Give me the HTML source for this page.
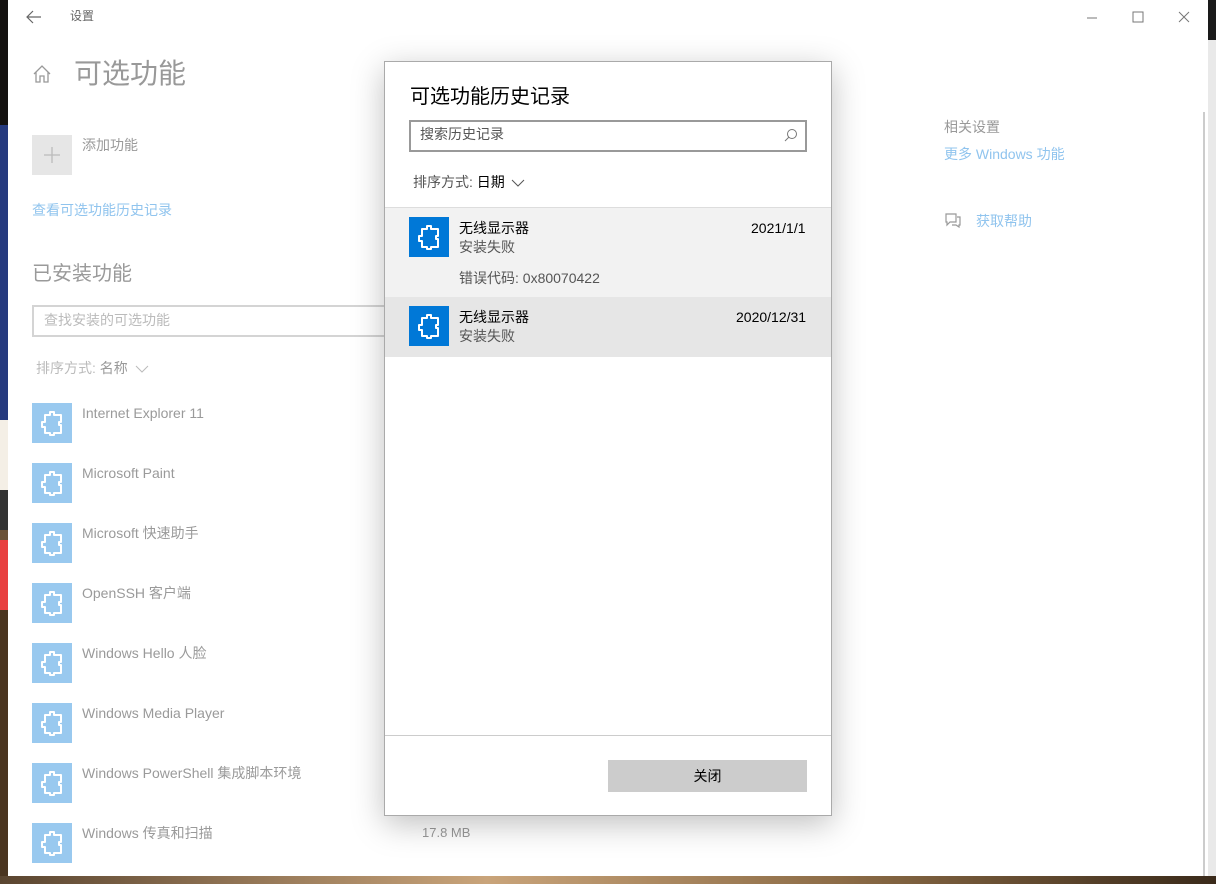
<!DOCTYPE html>
<html><head><meta charset="utf-8">
<style>
*{margin:0;padding:0;box-sizing:border-box}
body{width:1216px;height:884px;overflow:hidden;position:relative;background:#6b5238;font-family:"Liberation Sans","Noto Sans CJK SC",sans-serif}
.abs{position:absolute}
.win{position:absolute;left:8px;top:0;width:1200px;height:876px;background:#fff}
.t{position:absolute;white-space:nowrap;line-height:1.32}
.ico{position:absolute;width:40px;height:40px;background:#99c9ef}
.ico svg,.bico svg{position:absolute;left:0;top:0}
.bico{position:absolute;width:40px;height:40px;background:#0078d7}
.gray{color:#9a9a9a}
</style></head><body>
<div class="abs" style="left:0;top:0;width:8px;height:125px;background:#141210"></div>
<div class="abs" style="left:0;top:125px;width:8px;height:295px;background:#263a7e"></div>
<div class="abs" style="left:0;top:420px;width:8px;height:70px;background:#f4efe6"></div>
<div class="abs" style="left:0;top:490px;width:8px;height:40px;background:#333"></div>
<div class="abs" style="left:0;top:540px;width:8px;height:70px;background:#e84040"></div>
<div class="abs" style="left:0;top:610px;width:8px;height:274px;background:#4a3520"></div>
<div class="abs" style="left:1208px;top:0;width:8px;height:884px;background:#e9e9e9"></div>
<div class="abs" style="left:1208px;top:0;width:8px;height:40px;background:#1a1a1a"></div>
<div class="abs" style="left:0;top:876px;width:1216px;height:8px;background:linear-gradient(90deg,#5a4530,#c9a47a 40%,#8a6a45 70%,#3a2a1a)"></div>

<div class="win">
<svg class="abs" style="left:18px;top:10px" width="16" height="14"><path d="M7 1 L1 7 L7 13 M1 7 H15" stroke="#666" fill="none" stroke-width="1.2"/></svg>
<div class="t" style="left:62px;top:9px;font-size:12px;color:#666">设置</div>
<svg class="abs" style="left:1078px;top:12px" width="12" height="12"><path d="M1 6 H11" stroke="#777" stroke-width="1"/></svg>
<svg class="abs" style="left:1124px;top:11px" width="12" height="12"><rect x="1" y="1" width="10" height="10" stroke="#777" fill="none"/></svg>
<svg class="abs" style="left:1170px;top:11px" width="12" height="12"><path d="M1 1 L11 11 M11 1 L1 11" stroke="#777"/></svg>
<div class="abs" style="left:1195px;top:112px;width:2px;height:764px;background:#ccc"></div>

<svg class="abs" style="left:24px;top:64px" width="20" height="20"><path d="M2 10 L10 2 L18 10 M4 8 V18 H8 V12 H12 V18 H16 V8" stroke="#999" fill="none" stroke-width="1.3"/></svg>
<div class="t" style="left:66px;top:56px;font-size:28px;color:#999">可选功能</div>
<div class="abs" style="left:24px;top:135px;width:40px;height:40px;background:#e6e6e6"></div>
<svg class="abs" style="left:34px;top:145px" width="20" height="20"><path d="M10 2 V18 M2 10 H18" stroke="#bbb" stroke-width="1.3"/></svg>
<div class="t gray" style="left:74px;top:136px;font-size:14px">添加功能</div>
<div class="t" style="left:24px;top:201px;font-size:14px;color:#90c4ee">查看可选功能历史记录</div>
<div class="t gray" style="left:24px;top:261px;font-size:20px">已安装功能</div>
<div class="abs" style="left:24px;top:305px;width:380px;height:32px;border:2px solid #d4d4d4"></div>
<div class="t" style="left:36px;top:311px;font-size:14px;color:#bbb">查找安装的可选功能</div>
<div class="t" style="left:28px;top:359px;font-size:14px;color:#bbb">排序方式: <span style="color:#999">名称</span></div>
<svg class="abs" style="left:127px;top:364px" width="14" height="10"><path d="M1 2 L7 8 L13 2" stroke="#bbb" fill="none"/></svg>

<div id="list"></div>
<div class="t gray" style="left:414px;top:824px;font-size:13px">17.8 MB</div>

<div class="t" style="left:936px;top:118px;font-size:14px;color:#999">相关设置</div>
<div class="t" style="left:936px;top:145px;font-size:14px;color:#90c4ee">更多 Windows 功能</div>
<svg class="abs" style="left:936px;top:212px" width="18" height="16"><path d="M2 2 H12 V10 H6 L3 13 V10 H2 Z M13 5 H16 V13 H15 V15 L12 13 H8" stroke="#999" fill="none" stroke-width="1.2"/></svg>
<div class="t" style="left:968px;top:212px;font-size:14px;color:#90c4ee">获取帮助</div>
</div>

<!-- dialog -->
<div class="abs" style="left:384px;top:61px;width:448px;height:755px;background:#fff;border:1px solid #aaa;box-shadow:0 8px 30px rgba(0,0,0,.25)">
<div class="t" style="left:25px;top:22px;font-size:20px;color:#000">可选功能历史记录</div>
<div class="abs" style="left:24px;top:58px;width:398px;height:32px;border:2px solid #999"></div>
<div class="t" style="left:35px;top:63px;font-size:14px;color:#555">搜索历史记录</div>
<svg class="abs" style="left:399px;top:66px" width="14" height="14"><circle cx="8" cy="6" r="4.5" stroke="#777" fill="none"/><path d="M5 9 L1 13" stroke="#777"/></svg>
<div class="t" style="left:28px;top:111px;font-size:14px;color:#555">排序方式: <span style="color:#000">日期</span></div>
<svg class="abs" style="left:126px;top:116px" width="14" height="10"><path d="M1 2 L7 8 L13 2" stroke="#555" fill="none"/></svg>
<div class="abs" style="left:0;top:145px;width:446px;height:90px;background:#f2f2f2;border-top:1px solid #ddd"></div>
<div class="abs" style="left:0;top:235px;width:446px;height:60px;background:#e6e6e6"></div>
<div class="bico" style="left:24px;top:155px"><svg width="40" height="40"><path d="M18 9 h4 v3 h7 v7 h-2 v3 h2 v8 h-7 v2 h-4 v-2 h-5 v-6 h-3 v-5 h3 v-7 h5 z" stroke="#fff" fill="none" stroke-width="2" stroke-linejoin="round"/></svg></div>
<div class="t" style="left:74px;top:157px;font-size:14px;color:#000">无线显示器</div>
<div class="t" style="left:74px;top:176px;font-size:14px;color:#555">安装失败</div>
<div class="t" style="left:366px;top:157px;font-size:14px;color:#000">2021/1/1</div>
<div class="t" style="left:74px;top:207px;font-size:14px;color:#555">错误代码: 0x80070422</div>
<div class="bico" style="left:24px;top:244px"><svg width="40" height="40"><path d="M18 9 h4 v3 h7 v7 h-2 v3 h2 v8 h-7 v2 h-4 v-2 h-5 v-6 h-3 v-5 h3 v-7 h5 z" stroke="#fff" fill="none" stroke-width="2" stroke-linejoin="round"/></svg></div>
<div class="t" style="left:74px;top:246px;font-size:14px;color:#000">无线显示器</div>
<div class="t" style="left:74px;top:265px;font-size:14px;color:#555">安装失败</div>
<div class="t" style="left:351px;top:246px;font-size:14px;color:#000">2020/12/31</div>
<div class="abs" style="left:0;top:673px;width:446px;height:1px;background:#ccc"></div>
<div class="abs" style="left:223px;top:698px;width:199px;height:32px;background:#ccc;text-align:center;line-height:32px;font-size:14px;color:#000">关闭</div>
</div>

<script>
var items=["Internet Explorer 11","Microsoft Paint","Microsoft 快速助手","OpenSSH 客户端","Windows Hello 人脸","Windows Media Player","Windows PowerShell 集成脚本环境","Windows 传真和扫描"];
var h="";
items.forEach(function(s,i){var y=403+i*60;
h+='<div class="ico" style="left:24px;top:'+y+'px"><svg width="40" height="40"><path d="M18 9 h4 v3 h7 v7 h-2 v3 h2 v8 h-7 v2 h-4 v-2 h-5 v-6 h-3 v-5 h3 v-7 h5 z" stroke="#fff" fill="none" stroke-width="2" stroke-linejoin="round"/></svg></div><div class="t gray" style="left:74px;top:'+(y+1)+'px;font-size:14px">'+s+'</div>';});
document.getElementById("list").outerHTML=h;
</script>
</body></html>
